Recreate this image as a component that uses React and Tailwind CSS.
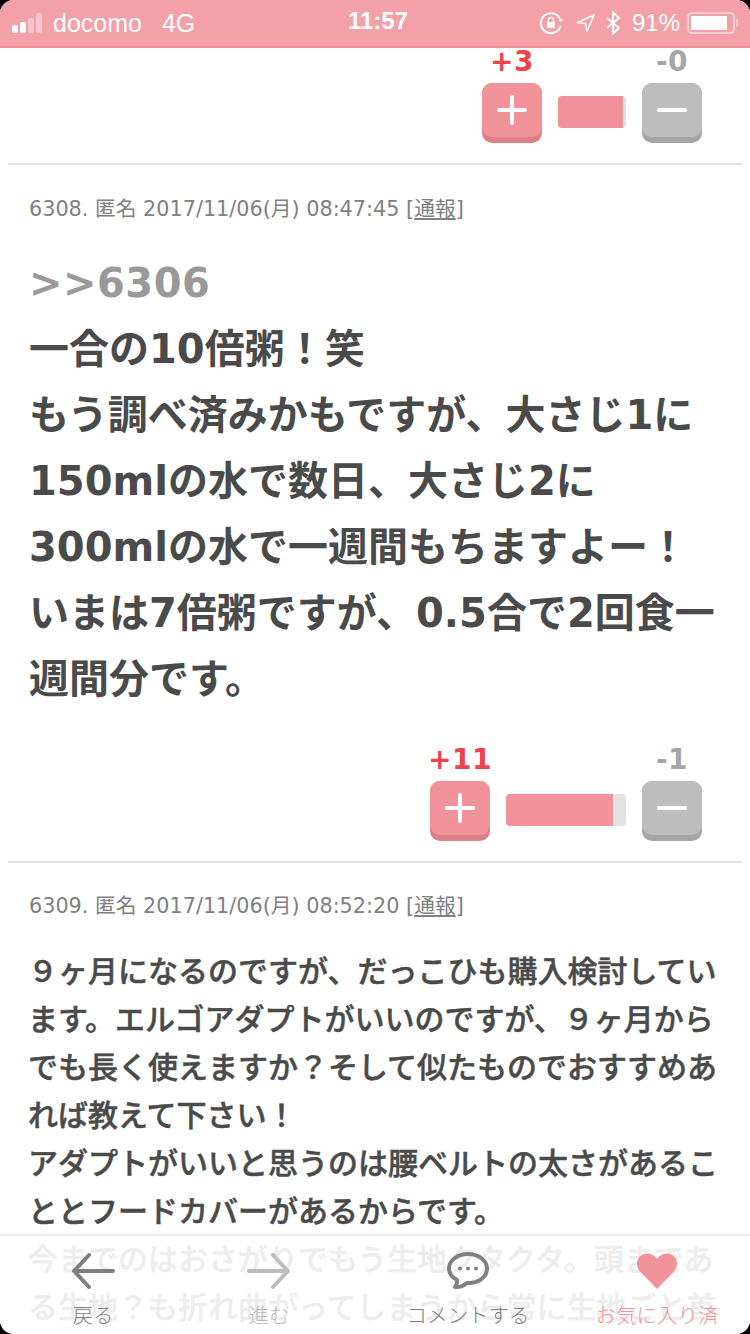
const FONT = "font-['DejaVu_Sans','Noto_Sans_CJK_JP',sans-serif]";

function Vote({ plus, minus, pct, barW }) {
  return (
    <div className="flex justify-end items-start pr-[48px]">
      <div className="w-[60px] flex flex-col items-center">
        <div className="h-[30px] text-[28px] leading-[28px] font-bold tracking-[0.5px] text-[#ef434c] whitespace-nowrap">{plus}</div>
        <VoteBtn kind="plus" />
      </div>
      <div className="mx-[16px] mt-[48px] h-[32px] rounded-[4px] bg-[#e2e2e2] overflow-hidden" style={{ width: barW }}>
        <div className="h-full bg-[#f2939c]" style={{ width: pct }} />
      </div>
      <div className="w-[60px] flex flex-col items-center">
        <div className="h-[30px] text-[28px] leading-[28px] font-bold tracking-[0.5px] text-[#a5a5a5] whitespace-nowrap">{minus}</div>
        <VoteBtn kind="minus" />
      </div>
    </div>
  );
}

function VoteBtn({ kind }) {
  const plus = kind === "plus";
  return (
    <div className={`mt-[5px] w-[60px] h-[60px] rounded-[10px] ${plus ? "bg-[#de7f88]" : "bg-[#a6a6a6]"}`}>
      <div className={`w-[60px] h-[54px] rounded-[10px] flex items-center justify-center ${plus ? "bg-[#f2939c]" : "bg-[#bdbdbd]"}`}>
        <svg width="30" height="30" viewBox="0 0 30 30" fill="none" stroke="#fff" strokeWidth="4" strokeLinecap="round">
          <path d="M2 15H28" />
          {plus && <path d="M15 2V28" />}
        </svg>
      </div>
    </div>
  );
}

function Meta({ text }) {
  return (
    <div className="text-[20.75px] leading-[28px] text-[#808080] whitespace-nowrap">
      {text} [<span className="underline">通報</span>]
    </div>
  );
}

function Status() {
  return (
    <div className="h-[48px] shrink-0 bg-[#f3a0a8] border-b-[2px] border-[#f0919a] flex items-center text-white relative pl-[12px] pr-[12px]">
      <div className="flex items-end gap-[2px] h-[20px]">
        <div className="w-[6px] h-[8px] rounded-[2px] bg-white" />
        <div className="w-[6px] h-[11px] rounded-[2px] bg-white" />
        <div className="w-[6px] h-[15px] rounded-[2px] bg-white/40" />
        <div className="w-[6px] h-[20px] rounded-[2px] bg-white/40" />
      </div>
      <span className="ml-[11px] text-[25px] leading-[30px] font-['Liberation_Sans',sans-serif]">docomo</span>
      <span className="ml-[20px] text-[25px] leading-[30px] font-['Liberation_Sans',sans-serif]">4G</span>
      <span className="absolute left-[348px] top-[6px] text-[24px] leading-[30px] font-semibold font-['Liberation_Sans',sans-serif]">11:57</span>
      <div className="ml-auto flex items-center">
        <svg width="24" height="24" viewBox="0 0 24 24" fill="none" stroke="#fff" strokeWidth="2" className="mr-[13px]">
          <path d="M21 8A10 10 0 1 0 21.5 15" />
          <path d="M19 9l3 2 2-3" fill="#fff" stroke="none" />
          <rect x="8" y="11" width="8" height="6" rx="1" fill="#fff" stroke="none" />
          <path d="M9.5 11V9a2.5 2.5 0 0 1 5 0v2" strokeWidth="1.500" />
        </svg>
        <svg width="20" height="20" viewBox="0 0 20 20" fill="none" stroke="#fff" strokeWidth="1.600" strokeLinejoin="round" className="mr-[9px]">
          <path d="M18 2L1.500 9.500 9.500 10.500 11 18.500Z" />
        </svg>
        <svg width="16" height="24" viewBox="0 0 16 24" fill="none" stroke="#fff" strokeWidth="2" className="mr-[11px]">
          <path d="M2 7L14 17 8 22.500V1.500L14 7 2 17" />
        </svg>
        <span className="text-[24px] leading-[30px] font-['Liberation_Sans',sans-serif] mr-[7px]">91%</span>
        <div className="w-[48px] h-[22px] rounded-[5px] border-[2px] border-white/50 p-[2px]">
          <div className="h-full w-[91%] bg-white rounded-[1px]" />
        </div>
        <div className="ml-[1px] w-[2px] h-[8px] bg-white/50 rounded-r-[2px]" />
      </div>
    </div>
  );
}

function NavItem({ icon, label, cls, box }) {
  return (
    <div className={`flex flex-col items-center ${box}`}>
      <div className="h-[48px] flex items-center justify-center mt-[11px]">{icon}</div>
      <div className={`mt-[9px] text-[20.5px] leading-[24px] font-light whitespace-nowrap ${cls}`}>{label}</div>
    </div>
  );
}

function Nav() {
  const back = (
    <svg width="44" height="36" viewBox="0 0 44 36" fill="none" stroke="#808080" strokeWidth="4" strokeLinecap="round" strokeLinejoin="round">
      <path d="M42 18H3M18 2L3 18l15 16" />
    </svg>
  );
  const fwd = (
    <svg width="44" height="36" viewBox="0 0 44 36" fill="none" stroke="#bdbdbd" strokeWidth="4" strokeLinecap="round" strokeLinejoin="round">
      <path d="M2 18H41M26 2l15 16-15 16" />
    </svg>
  );
  const comment = (
    <svg width="42" height="38" viewBox="0 0 42 38" fill="none">
      <path d="M21 2C10.500 2 2 8.500 2 16.500C2 21.500 5.500 25.500 10 28C10.500 30.500 9.500 33 8 35C13 35.500 17 33.500 20 31C31.500 31.500 40 25 40 16.500C40 8.500 31.500 2 21 2Z" stroke="#808080" strokeWidth="4" strokeLinejoin="round" />
      <circle cx="13" cy="16.500" r="2" fill="#808080" />
      <circle cx="21" cy="16.500" r="2" fill="#808080" />
      <circle cx="29" cy="16.500" r="2" fill="#808080" />
    </svg>
  );
  const heart = (
    <svg width="40" height="36" viewBox="0 0 40 36">
      <path d="M20 36L3 18.500C-1 14 -1 7 3 3.200C7.500 -1 14.500 -0.500 20 5.500C25.500 -0.500 32.500 -1 37 3.200C41 7 41 14 37 18.500Z" fill="#f2939c" />
    </svg>
  );
  return (
    <div className="absolute left-0 right-0 bottom-0 h-[100px] bg-white/90 border-t-[2px] border-[#ececec] flex">
      <NavItem box="ml-[21px] w-[144px]" icon={back} label="戻る" cls="text-[#808080]" />
      <NavItem box="ml-[32px] w-[144px]" icon={fwd} label="進む" cls="text-[#bdbdbd]" />
      <NavItem box="ml-[55px] w-[144px]" icon={comment} label="コメントする" cls="text-[#808080]" />
      <NavItem box="ml-[45px] w-[144px]" icon={heart} label="お気に入り済" cls="text-[#f2939c]" />
    </div>
  );
}

export default function App() {
  return (
    <div className={`relative w-[750px] h-[1334px] overflow-hidden bg-black ${FONT}`}>
      <div className="relative w-full h-full overflow-hidden bg-white rounded-[14px] flex flex-col">
        <Status />
        <div className="flex-1 overflow-hidden">
          <Vote plus="+3" minus="-0" pct="96%" barW="68px" />
          <div className="mx-[8px] mt-[20px] h-[2px] bg-[#e2e2e2]" />
          <div className="px-[29px] pt-[30px]">
            <Meta text="6308. 匿名 2017/11/06(月) 08:47:45" />
            <div className="mt-[27px] text-[40px] leading-[66px] font-bold text-[#4a4a4a] whitespace-nowrap">
              <div className="text-[#999999] tracking-[0.5px]">&gt;&gt;6306</div>
              <div>一合の10倍粥！笑</div>
              <div>もう調べ済みかもですが、大さじ1に</div>
              <div>150mlの水で数日、大さじ2に</div>
              <div>300mlの水で一週間もちますよー！</div>
              <div>いまは7倍粥ですが、0.5合で2回食一</div>
              <div>週間分です。</div>
            </div>
          </div>
          <div className="mt-[34px]">
            <Vote plus="+11" minus="-1" pct="89%" barW="120px" />
          </div>
          <div className="mx-[8px] mt-[20px] h-[2px] bg-[#e2e2e2]" />
          <div className="pl-[28px] pr-[29px] pt-[29px]">
            <div className="pl-[1px]">
              <Meta text="6309. 匿名 2017/11/06(月) 08:52:20" />
            </div>
            <div className="mt-[28px] text-[30px] leading-[48px] font-medium [-webkit-text-stroke:0.5px_#4a4a4a] text-[#4a4a4a] whitespace-nowrap">
              <div>９ヶ月になるのですが、だっこひも購入検討してい</div>
              <div>ます。エルゴアダプトがいいのですが、９ヶ月から</div>
              <div>でも長く使えますか？そして似たものでおすすめあ</div>
              <div>れば教えて下さい！</div>
              <div>アダプトがいいと思うのは腰ベルトの太さがあるこ</div>
              <div>ととフードカバーがあるからです。</div>
              <div>今までのはおさがりでもう生地クタクタ。頭まであ</div>
              <div>る生地？も折れ曲がってしまうから常に生地ごと首</div>
            </div>
          </div>
        </div>
        <Nav />
      </div>
    </div>
  );
}
